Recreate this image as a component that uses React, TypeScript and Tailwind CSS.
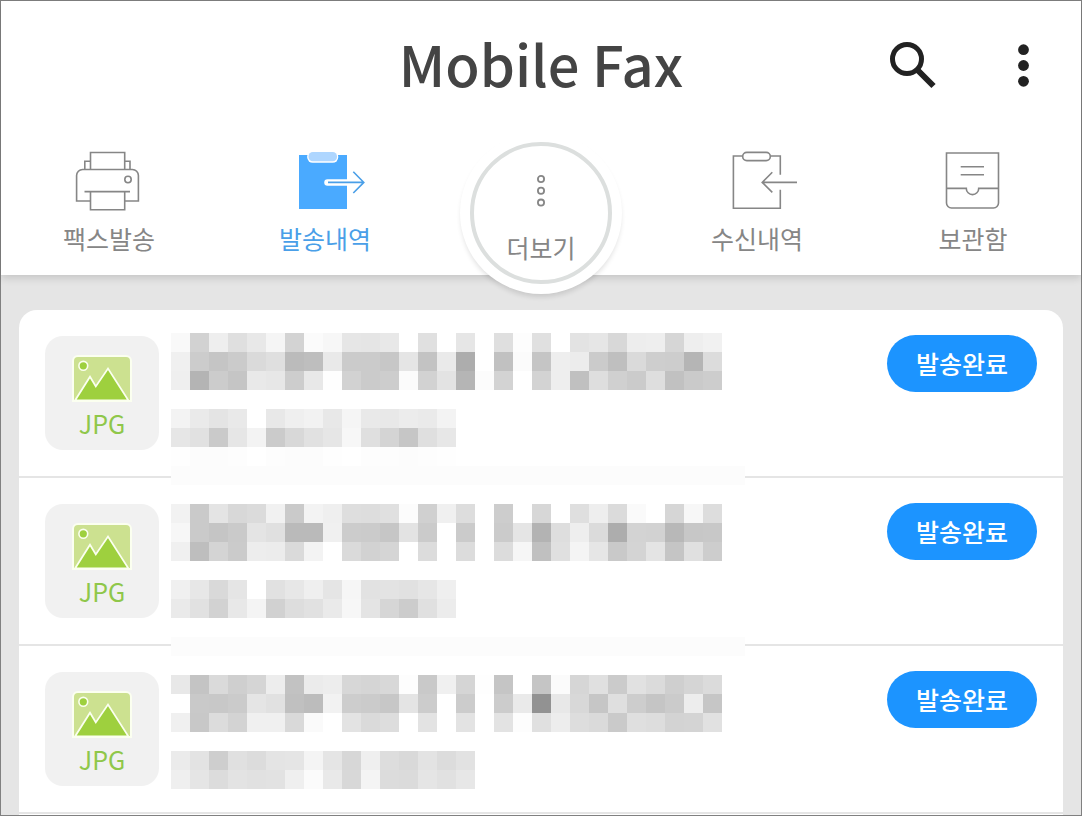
import type { ReactNode } from 'react'

const CELL = 19

// Masked text blocks, two hex digits of grey per cell, keyed by grid line
const maskLines: { line: number; cells: string }[] = [
  { line: 0, cells: 'f9d2eedfe8f5d3fbf7e6e5e8ffe0ffe6ffdffde0ffe3e6d8edeed6eef1' },
  { line: 1, cells: 'f0ccc5cbdadfbbbee9cbcbc7e5c3eaadffc1fbc5eeeccbbfdacecdb5dc' },
  { line: 2, cells: 'efb4ccc5e9e7cde8fed2cbcdfbd2e3b5fcd3ffd3eec0ded0cbdec1cacd' },
  { line: 4, cells: 'f3eae4e9ffe8eff2e8f5e9e8eceaf3' },
  { line: 5, cells: 'e6e1cae6f3cbd8e1e6f7dfd4c6dfe7' },
  { line: 6, cells: 'fefcfcfdfffdfcfcfefffdfdfcfdfe' },
  { line: 9, cells: 'f2cae4d8dbf1caf3efdedde0fcd0f0ddffcdffd7ffdfeedbfaffd6f7dd' },
  { line: 10, cells: 'f7cac5cae4e0babaf0cccbc6e3cbffcbffcbe5b3deeedbadd3d2b8c7c8' },
  { line: 11, cells: 'f0bed4cbedecdaf3ffdad2d5ffdcffdcffdcf6c0e0f4e6c9d4e4c5e0cd' },
  { line: 13, cells: 'f0e7d9e5ffe1e7efe5f6e2e3e1e6ef' },
  { line: 14, cells: 'eae1d2e8f4d1dde1eaf7e4d6cce0ec' },
  { line: 18, cells: 'e8c4dacfd5edc2ebedd7d5d8fdc9f0d5fec5ffc5fbd6e0cbe1dbcfd5db' },
  { line: 19, cells: 'ffc9c8cbe5e1c0bcf2cdcbc7e4ccffccffccea92e8d8c6dfcdc5cbedc6' },
  { line: 20, cells: 'f0c8dcd3f0f0d9faffe3daddffe3ffe3ffe3fde0eddddacadfddd3d4e1' },
  { line: 22, cells: 'ebe3cee0dce4e5f4e5d7efddd9e3dce2' },
  { line: 23, cells: 'efe5dce3e1e2effbe9d8f4dcdbe5e1e7' },
]

const faxes = [
  { id: 1, type: 'JPG', status: '발송완료' },
  { id: 2, type: 'JPG', status: '발송완료' },
  { id: 3, type: 'JPG', status: '발송완료' },
]

function PrinterIcon() {
  return (
    <svg width="84" height="60" viewBox="0 0 84 60" fill="none" stroke="currentColor" strokeWidth="1.6">
      <path d="M23.5 18.5V1.5H57.7V18.5" />
      <path d="M23.5 10.2H17.8V18.5M57.7 10.2H63V18.5" />
      <path d="M23.5 50H9.6V24.5A6 6 0 0 1 15.6 18.5H65.4A6 6 0 0 1 71.4 24.5V50H57.7" />
      <circle cx="61" cy="28.5" r="3.2" />
      <path d="M17.5 40.6H63M23.5 40.6V58.7H57.7V40.6" />
    </svg>
  )
}

function SentIcon() {
  return (
    <svg width="84" height="60" viewBox="0 0 84 60" fill="none">
      <rect x="16" y="4" width="48" height="54" fill="#4aaaff" />
      <rect x="24.2" y="-0.2" width="31" height="12" rx="5.5" fill="#fff" />
      <rect x="25.5" y="1" width="28.5" height="9.3" rx="4.3" fill="#aed6ff" />
      <path d="M44.5 31.4H66" stroke="#fff" strokeWidth="6.5" strokeLinecap="round" />
      <path d="M45 31.4H80.5M70.3 20.8L80.8 31.4L70.3 42" stroke="#4a9fe8" strokeWidth="1.6" />
    </svg>
  )
}

function ReceivedIcon() {
  return (
    <svg width="84" height="60" viewBox="0 0 84 60" fill="none" stroke="currentColor" strokeWidth="1.6">
      <path d="M27.7 5H18.4V57.3H65.3V38.7M65.3 23.7V5H55.3" />
      <rect x="27.7" y="1.4" width="27.6" height="8.2" rx="4.1" />
      <path d="M82 31.4H47.5M57.3 21.3L47.2 31.4L57.3 41.4" />
    </svg>
  )
}

function ArchiveIcon() {
  return (
    <svg width="84" height="60" viewBox="0 0 84 60" fill="none" stroke="currentColor" strokeWidth="1.6">
      <path d="M15.5 2H67.5V52A5 5 0 0 1 62.5 57H20.5A5 5 0 0 1 15.5 52Z" />
      <path d="M29.7 15.7H53M29.7 23.7H53" />
      <path d="M15.5 37.4H35.3A6.2 6.2 0 0 0 47.7 37.4H67.5" />
    </svg>
  )
}

function ImageIcon() {
  return (
    <svg width="60" height="48" viewBox="0 0 60 48">
      <path d="M1 46V6A5 5 0 0 1 6 1H54A5 5 0 0 1 59 6V46Z" fill="#cce190" stroke="#fbfff0" strokeWidth="2" />
      <path d="M3 45.5L18 21.8L23.8 31.4L36 13.6L56.5 45.5Z" fill="#9ed03e" stroke="#fbfff0" strokeWidth="1.8" />
      <circle cx="11.3" cy="10.8" r="4.4" fill="#9ed03e" stroke="#fbfff0" strokeWidth="1.6" />
      <path d="M0 45.9H60" stroke="#fbfff0" strokeWidth="2" />
    </svg>
  )
}

function NavItem({ label, active, children }: { label: string; active?: boolean; children: ReactNode }) {
  return (
    <a
      href="#"
      aria-current={active ? 'page' : undefined}
      className={`flex flex-1 flex-col items-center gap-[11px] pt-[19px] ${active ? 'text-[#4a9fe8]' : 'text-[#868686]'}`}
    >
      {children}
      <span className="text-[25px] leading-8">{label}</span>
    </a>
  )
}

function TextMask() {
  return (
    <svg
      width="574"
      height="456"
      viewBox="0 0 574 456"
      shapeRendering="crispEdges"
      className="pointer-events-none absolute left-[152px] top-[23px]"
    >
      <rect y={7 * CELL} width="574" height={CELL} fill="#fcfcfc" />
      <rect y={16 * CELL} width="574" height={CELL} fill="#fcfcfc" />
      {maskLines.map(({ line, cells }) =>
        (cells.match(/../g) || []).map((v, i) => (
          <rect key={`${line}-${i}`} x={i * CELL} y={line * CELL} width={CELL} height={CELL} fill={`#${v}${v}${v}`} />
        ))
      )}
    </svg>
  )
}

export default function App() {
  return (
    <div className="flex min-h-screen w-full flex-col border border-[#808080] bg-[#e5e5e5] font-['Noto_Sans_CJK_KR',sans-serif]">
      <header className="relative z-10 bg-white shadow-[0_3px_8px_rgba(0,0,0,0.14)]">
        {/* Title bar */}
        <div className="grid h-[131px] grid-cols-[1fr_auto_1fr] items-center pb-[3px]">
          <span />
          <h1 className="pb-1 text-[56px] font-medium leading-none text-[#444444]">Mobile Fax</h1>
          <div className="flex items-center justify-end gap-[62px] pr-[34px]">
            <button type="button" aria-label="검색">
              <svg width="48" height="48" viewBox="0 0 48 48" fill="none" stroke="#222222">
                <circle cx="18" cy="18" r="14.5" strokeWidth="5" />
                <path d="M29 29.5L44.5 45" strokeWidth="6" />
                <path d="M28 28L33 33" strokeWidth="4" />
              </svg>
            </button>
            <button type="button" aria-label="메뉴">
              <svg width="48" height="48" viewBox="0 0 48 48" fill="#222222">
                <circle cx="24.5" cy="8.7" r="5.4" />
                <circle cx="24.5" cy="24.5" r="5.4" />
                <circle cx="24.5" cy="40.3" r="5.4" />
              </svg>
            </button>
          </div>
        </div>

        {/* Tabs */}
        <nav className="flex h-[143px] items-start">
          <NavItem label="팩스발송">
            <PrinterIcon />
          </NavItem>
          <NavItem label="발송내역" active>
            <SentIcon />
          </NavItem>
          <div className="flex flex-1 justify-center">
            <a
              href="#"
              className="shrink-0 rounded-full bg-white p-[10px] text-[#868686] shadow-[0_4px_5px_-1px_rgba(0,0,0,0.12)]"
            >
              <span className="flex size-[142px] flex-col items-center gap-[23px] rounded-full border-4 border-[#dcdfde] pt-7">
                <svg width="12" height="34" viewBox="0 0 12 34" fill="none" stroke="currentColor" strokeWidth="1.8">
                  <circle cx="6" cy="5" r="3.1" />
                  <circle cx="6" cy="16.8" r="3.1" />
                  <circle cx="6" cy="28.6" r="3.1" />
                </svg>
                <span className="text-[25px] leading-8">더보기</span>
              </span>
            </a>
          </div>
          <NavItem label="수신내역">
            <ReceivedIcon />
          </NavItem>
          <NavItem label="보관함">
            <ArchiveIcon />
          </NavItem>
        </nav>
      </header>

      <main className="flex flex-1 flex-col px-[18px] pt-[35px]">
        <div className="relative flex-1 rounded-t-[18px] bg-white">
          <ul>
            {faxes.map((fax) => (
              <li key={fax.id} className="flex items-start justify-between border-b-2 border-[#e5e5e5] px-[26px] pt-[25px] pb-[26px]">
                <div className="mt-px flex size-[114px] flex-col items-center rounded-[18px] bg-[#f1f1f1] pt-[19px]">
                  <ImageIcon />
                  <span className="text-[25px] leading-10 text-[#8fc74a]">{fax.type}</span>
                </div>
                <button
                  type="button"
                  className="h-[57px] w-[150px] rounded-full bg-[#1c94ff] pb-[2px] text-[25px] font-medium leading-8 text-white"
                >
                  {fax.status}
                </button>
              </li>
            ))}
          </ul>
          <TextMask />
        </div>
      </main>
    </div>
  )
}
